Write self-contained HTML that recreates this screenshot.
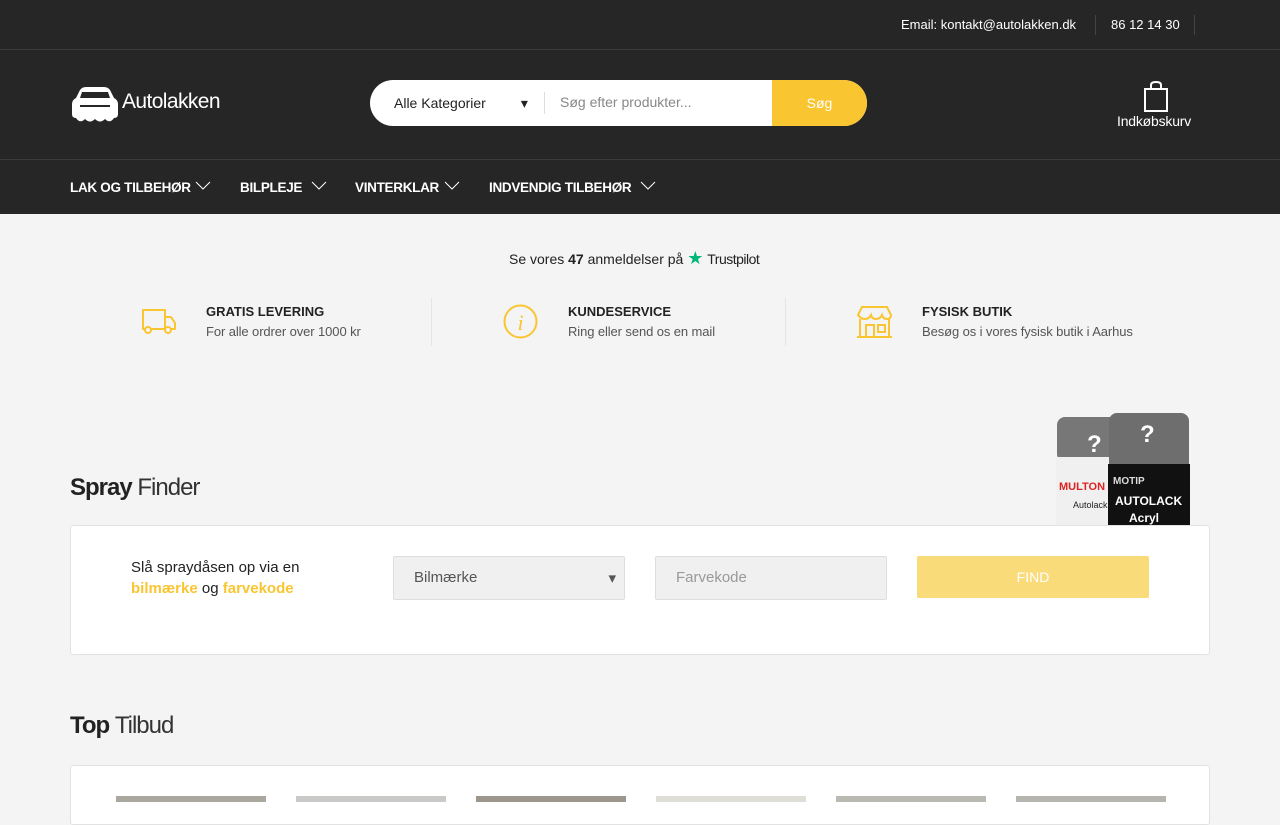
<!DOCTYPE html>
<html><head><meta charset="utf-8"><style>
*{box-sizing:border-box;margin:0;padding:0}
body{width:1280px;height:800px;overflow:hidden;background:#f4f4f4;font-family:"Liberation Sans",sans-serif;color:#222}
.top{height:50px;background:#262626;border-bottom:1px solid #3a3a3a;position:relative;color:#fff;font-size:13px}
.top span{position:absolute;top:17px}
.hdr{height:110px;background:#262626;position:relative;border-bottom:1px solid #3a3a3a}
.nav{height:54px;background:#262626;position:relative;color:#fff;font-size:13.5px;font-weight:bold;letter-spacing:-0.3px}
.nav span{position:absolute;top:20px}
.nav svg{position:absolute;top:21px}
.srch{position:absolute;left:370px;top:30px;width:497px;height:46px;background:#fff;border-radius:23px;overflow:hidden}
.btn{position:absolute;right:0;top:0;width:95px;height:46px;background:#f9c530;color:#fff;font-size:14px;text-align:center;line-height:46px}
.feat{position:absolute;top:304px}
.feat b{display:block;font-size:13px;margin-bottom:4px}
.feat span{font-size:13px;color:#555;letter-spacing:-0.1px}
h2{position:absolute;font-size:24px;font-weight:bold;letter-spacing:-1px}
h2 i{font-style:normal;font-weight:normal;color:#333}
.box{position:absolute;left:70px;width:1140px;background:#fff;border:1px solid #e2e2e2;border-radius:3px}
.fld{position:absolute;top:30px;width:232px;height:44px;background:#f0f0f0;border:1px solid #ddd;border-radius:2px;font-size:15px;color:#777;padding:12px 20px}
</style></head><body>
<div class="top"><span style="left:901px">Email: kontakt@autolakken.dk</span><div style="position:absolute;left:1095px;top:15px;width:1px;height:20px;background:#444"></div><span style="left:1111px">86 12 14 30</span><div style="position:absolute;left:1194px;top:15px;width:1px;height:20px;background:#444"></div></div>
<div class="hdr">
<svg style="position:absolute;left:72px;top:36px" width="46" height="38" viewBox="0 0 46 38"><path d="M8 4 Q10 1 14 1 H32 Q36 1 38 4 L42 12 Q46 14 46 18 V28 Q46 32 42 32 Q38 38 33 33 Q28 38 23 33 Q18 38 13 33 Q8 38 4 32 Q0 32 0 28 V18 Q0 14 4 12 Z" fill="#fff"/><path d="M10 6 H36 L38 12 H8 Z" fill="#262626"/><rect x="8" y="19" width="30" height="2" fill="#262626"/></svg>
<div style="position:absolute;left:122px;top:40px;color:#fff;font-size:21px;letter-spacing:-0.6px">Autolakken</div>
<div class="srch"><div style="position:absolute;left:24px;top:15px;font-size:14px;color:#222">Alle Kategorier &nbsp;&nbsp;&nbsp;&nbsp;&nbsp;&nbsp;&nbsp;&nbsp;▾</div><div style="position:absolute;left:174px;top:12px;width:1px;height:22px;background:#ddd"></div><div style="position:absolute;left:190px;top:14px;font-size:14px;color:#888">Søg efter produkter...</div><div class="btn">Søg</div></div>
<svg style="position:absolute;left:1143px;top:31px" width="26" height="32" viewBox="0 0 26 32"><rect x="2" y="8" width="22" height="22" fill="none" stroke="#fff" stroke-width="2"/><path d="M8 8 V4 Q8 1 13 1 Q18 1 18 4 V8" fill="none" stroke="#fff" stroke-width="2"/></svg>
<div style="position:absolute;left:1117px;top:63px;color:#fff;font-size:14px;letter-spacing:-0.2px">Indkøbskurv</div>
</div>
<div class="nav">
<span style="left:70px">LAK OG TILBEHØR</span><svg style="left:195px" width="16" height="10"><path d="M1 1 L8 8 L15 1" fill="none" stroke="#fff"/></svg>
<span style="left:240px">BILPLEJE</span><svg style="left:311px" width="16" height="10"><path d="M1 1 L8 8 L15 1" fill="none" stroke="#fff"/></svg>
<span style="left:355px">VINTERKLAR</span><svg style="left:444px" width="16" height="10"><path d="M1 1 L8 8 L15 1" fill="none" stroke="#fff"/></svg>
<span style="left:489px">INDVENDIG TILBEHØR</span><svg style="left:640px" width="16" height="10"><path d="M1 1 L8 8 L15 1" fill="none" stroke="#fff"/></svg>
</div>
<div style="position:absolute;left:509px;top:248px;font-size:14px">Se vores <b>47</b> anmeldelser på <span style="color:#00b67a;font-size:18px">★</span> <b style="font-weight:normal;letter-spacing:-0.5px">Trustpilot</b></div>
<svg style="position:absolute;left:141px;top:308px" width="36" height="28" viewBox="0 0 36 28"><path d="M2 2 H24 V21 H2 Z M24 9 H30 L34 15 V21 H24" fill="none" stroke="#f9c530" stroke-width="2" stroke-linejoin="round"/><circle cx="7" cy="22" r="3" fill="#f4f4f4" stroke="#f9c530" stroke-width="2"/><circle cx="27" cy="22" r="3" fill="#f4f4f4" stroke="#f9c530" stroke-width="2"/></svg>
<div class="feat" style="left:206px"><b>GRATIS LEVERING</b><span>For alle ordrer over 1000 kr</span></div>
<div style="position:absolute;left:431px;top:298px;width:1px;height:48px;background:#e4e4e4"></div>
<svg style="position:absolute;left:503px;top:304px" width="35" height="35"><circle cx="17.5" cy="17.5" r="16" fill="none" stroke="#f9c530" stroke-width="2"/><text x="17.5" y="26" text-anchor="middle" font-family="Liberation Serif" font-style="italic" font-size="22" fill="#f9c530">i</text></svg>
<div class="feat" style="left:568px"><b>KUNDESERVICE</b><span>Ring eller send os en mail</span></div>
<div style="position:absolute;left:785px;top:298px;width:1px;height:48px;background:#e4e4e4"></div>
<svg style="position:absolute;left:856px;top:305px" width="37" height="34" viewBox="0 0 37 34"><path d="M6 2 H31 L35 10 Q35 14 31 14 Q27 14 26 10 Q24 14 20 14 Q16 14 15 10 Q13 14 9 14 Q5 14 2 10 Z" fill="none" stroke="#f9c530" stroke-width="2"/><path d="M4 14 V32 M33 14 V32 M1 32 H36 M10 32 V20 H18 V32 M22 20 H29 V27 H22 Z" fill="none" stroke="#f9c530" stroke-width="2"/></svg>
<div class="feat" style="left:922px"><b>FYSISK BUTIK</b><span>Besøg os i vores fysisk butik i Aarhus</span></div>
<h2 style="left:70px;top:474px">Spray <i>Finder</i></h2>
<svg style="position:absolute;left:1055px;top:412px" width="136" height="114"><rect x="2" y="5" width="64" height="45" rx="8" fill="#777"/><rect x="1" y="45" width="66" height="70" fill="#f0f0f0"/><text x="32" y="40" font-size="24" font-weight="bold" fill="#fff" font-family="Liberation Sans">?</text><text x="4" y="78" font-size="11" font-weight="bold" fill="#d22" font-family="Liberation Sans">MULTON</text><text x="18" y="96" font-size="9" fill="#222" font-family="Liberation Sans">Autolack</text><rect x="54" y="1" width="80" height="58" rx="8" fill="#6e6e6e"/><rect x="53" y="52" width="82" height="63" fill="#111"/><text x="85" y="30" font-size="24" font-weight="bold" fill="#fff" font-family="Liberation Sans">?</text><text x="58" y="72" font-size="10" font-weight="bold" fill="#ddd" font-family="Liberation Sans">MOTIP</text><text x="60" y="93" font-size="12" font-weight="bold" fill="#fff" font-family="Liberation Sans">AUTOLACK</text><text x="74" y="110" font-size="12" font-weight="bold" fill="#fff" font-family="Liberation Sans">Acryl</text></svg>
<div class="box" style="top:525px;height:130px">
<div style="position:absolute;left:60px;top:31px;font-size:15px;line-height:21px">Slå spraydåsen op via en<br><b style="color:#f9c530">bilmærke</b> og <b style="color:#f9c530">farvekode</b></div>
<div class="fld" style="left:322px;color:#555">Bilmærke<span style="position:absolute;right:8px">▾</span></div>
<div class="fld" style="left:584px;color:#999">Farvekode</div>
<div style="position:absolute;left:846px;top:30px;width:232px;height:42px;background:#fadb7a;color:#fff;font-size:14px;text-align:center;line-height:42px;border-radius:2px">FIND</div>
</div>
<h2 style="left:70px;top:712px">Top <i>Tilbud</i></h2>
<div class="box" style="top:765px;height:60px">
<div style="position:absolute;left:45px;top:30px;width:150px;height:6px;background:#aaa79f"></div>
<div style="position:absolute;left:225px;top:30px;width:150px;height:6px;background:#c9c9c7"></div>
<div style="position:absolute;left:405px;top:30px;width:150px;height:6px;background:#9c968d"></div>
<div style="position:absolute;left:585px;top:30px;width:150px;height:6px;background:#deddd6"></div>
<div style="position:absolute;left:765px;top:30px;width:150px;height:6px;background:#bbbab2"></div>
<div style="position:absolute;left:945px;top:30px;width:150px;height:6px;background:#b5b4ae"></div>
</div>
</body></html>
